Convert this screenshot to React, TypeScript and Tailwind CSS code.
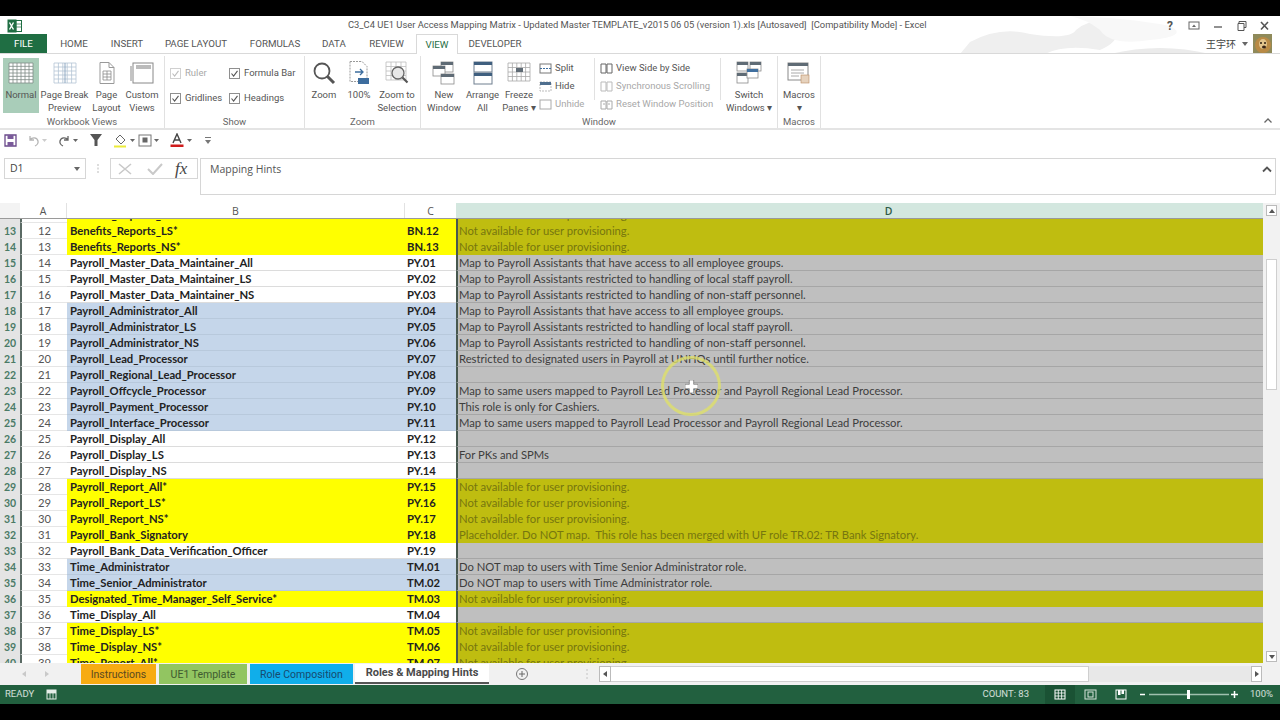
import React from 'react';

type Tone = 'yellow' | 'white' | 'blue';

interface Row {
  num: number;
  name: string;
  code: string;
  hint: string;
  tone: Tone;
}

const NA = 'Not available for user provisioning.';
const ALL = 'Map to Payroll Assistants that have access to all employee groups.';
const LOCAL = 'Map to Payroll Assistants restricted to handling of local staff payroll.';
const NON = 'Map to Payroll Assistants restricted to handling of non-staff personnel.';
const SAME = 'Map to same users mapped to Payroll Lead Processor and Payroll Regional Lead Processor.';

const rows: Row[] = [
  { num: 12, name: 'Benefits_Reports_All*', code: 'BN.11', hint: NA, tone: 'yellow' },
  { num: 13, name: 'Benefits_Reports_LS*', code: 'BN.12', hint: NA, tone: 'yellow' },
  { num: 14, name: 'Benefits_Reports_NS*', code: 'BN.13', hint: NA, tone: 'yellow' },
  { num: 15, name: 'Payroll_Master_Data_Maintainer_All', code: 'PY.01', hint: ALL, tone: 'white' },
  { num: 16, name: 'Payroll_Master_Data_Maintainer_LS', code: 'PY.02', hint: LOCAL, tone: 'white' },
  { num: 17, name: 'Payroll_Master_Data_Maintainer_NS', code: 'PY.03', hint: NON, tone: 'white' },
  { num: 18, name: 'Payroll_Administrator_All', code: 'PY.04', hint: ALL, tone: 'blue' },
  { num: 19, name: 'Payroll_Administrator_LS', code: 'PY.05', hint: LOCAL, tone: 'blue' },
  { num: 20, name: 'Payroll_Administrator_NS', code: 'PY.06', hint: NON, tone: 'blue' },
  { num: 21, name: 'Payroll_Lead_Processor', code: 'PY.07', hint: 'Restricted to designated users in Payroll at UNHQs until further notice.', tone: 'blue' },
  { num: 22, name: 'Payroll_Regional_Lead_Processor', code: 'PY.08', hint: '', tone: 'blue' },
  { num: 23, name: 'Payroll_Offcycle_Processor', code: 'PY.09', hint: SAME, tone: 'blue' },
  { num: 24, name: 'Payroll_Payment_Processor', code: 'PY.10', hint: 'This role is only for Cashiers.', tone: 'blue' },
  { num: 25, name: 'Payroll_Interface_Processor', code: 'PY.11', hint: SAME, tone: 'blue' },
  { num: 26, name: 'Payroll_Display_All', code: 'PY.12', hint: '', tone: 'white' },
  { num: 27, name: 'Payroll_Display_LS', code: 'PY.13', hint: 'For PKs and SPMs', tone: 'white' },
  { num: 28, name: 'Payroll_Display_NS', code: 'PY.14', hint: '', tone: 'white' },
  { num: 29, name: 'Payroll_Report_All*', code: 'PY.15', hint: NA, tone: 'yellow' },
  { num: 30, name: 'Payroll_Report_LS*', code: 'PY.16', hint: NA, tone: 'yellow' },
  { num: 31, name: 'Payroll_Report_NS*', code: 'PY.17', hint: NA, tone: 'yellow' },
  { num: 32, name: 'Payroll_Bank_Signatory', code: 'PY.18', hint: 'Placeholder. Do NOT map.  This role has been merged with UF role TR.02: TR Bank Signatory.', tone: 'yellow' },
  { num: 33, name: 'Payroll_Bank_Data_Verification_Officer', code: 'PY.19', hint: '', tone: 'white' },
  { num: 34, name: 'Time_Administrator', code: 'TM.01', hint: 'Do NOT map to users with Time Senior Administrator role.', tone: 'blue' },
  { num: 35, name: 'Time_Senior_Administrator', code: 'TM.02', hint: 'Do NOT map to users with Time Administrator role.', tone: 'blue' },
  { num: 36, name: 'Designated_Time_Manager_Self_Service*', code: 'TM.03', hint: NA, tone: 'yellow' },
  { num: 37, name: 'Time_Display_All', code: 'TM.04', hint: '', tone: 'white' },
  { num: 38, name: 'Time_Display_LS*', code: 'TM.05', hint: NA, tone: 'yellow' },
  { num: 39, name: 'Time_Display_NS*', code: 'TM.06', hint: NA, tone: 'yellow' },
  { num: 40, name: 'Time_Report_All*', code: 'TM.07', hint: NA, tone: 'yellow' },
];

const toneCell: Record<Tone, string> = {
  yellow: 'bg-[#ffff00]',
  white: 'bg-white border-b border-[#dcdcdc]',
  blue: 'bg-[#c5d6ea] border-b border-[#b8c9dc]',
};

const toneHint: Record<Tone, string> = {
  yellow: 'bg-[#bfbd10] text-[#76760f]',
  white: 'bg-[#bfbfbf] text-[#3d3d3d] border-b border-[#a6a6a6]',
  blue: 'bg-[#bfbfbf] text-[#3d3d3d] border-b border-[#a6a6a6]',
};

const menuTabs = [
  { label: 'HOME', w: 'w-[54px]' },
  { label: 'INSERT', w: 'w-[52px]' },
  { label: 'PAGE LAYOUT', w: 'w-[86px]' },
  { label: 'FORMULAS', w: 'w-[72px]' },
  { label: 'DATA', w: 'w-[46px]' },
  { label: 'REVIEW', w: 'w-[59px]' },
];

function Grid({ x, y, w, h, nx, ny, color }: { x: number; y: number; w: number; h: number; nx: number; ny: number; color: string }) {
  const lines = [];
  for (let i = 0; i <= nx; i++) lines.push(<line key={'v' + i} x1={x + (w * i) / nx} x2={x + (w * i) / nx} y1={y} y2={y + h} />);
  for (let i = 0; i <= ny; i++) lines.push(<line key={'h' + i} x1={x} x2={x + w} y1={y + (h * i) / ny} y2={y + (h * i) / ny} />);
  return <g stroke={color} strokeWidth="0.8" fill="none">{lines}</g>;
}

function Win({ x, y, w, h, bar = '#5f6b75' }: { x: number; y: number; w: number; h: number; bar?: string }) {
  return (
    <g>
      <rect x={x} y={y} width={w} height={h} fill="#fff" stroke="#8a8a8a" strokeWidth="0.8" />
      <rect x={x} y={y} width={w} height={3} fill={bar} />
    </g>
  );
}

function Icon({ w = 28, h = 28, children }: { w?: number; h?: number; children: React.ReactNode }) {
  return <svg width={w} height={h} viewBox={`0 0 ${w} ${h}`}>{children}</svg>;
}

function BigButton({ width, lines, active, icon }: { width: string; lines: string[]; active?: boolean; icon: React.ReactNode }) {
  return (
    <div className={`${width} h-[55px] flex flex-col items-center shrink-0 ${active ? 'bg-[#a9cdb9]' : ''}`}>
      <div className="h-[30px] shrink-0 flex items-center justify-center">{icon}</div>
      {lines.map((line) => (
        <div key={line} className="text-[9.5px] leading-[13px] text-[#555] whitespace-nowrap">{line}</div>
      ))}
    </div>
  );
}

function Check({ label, disabled }: { label: string; disabled?: boolean }) {
  return (
    <div className="flex items-center gap-[4px]">
      <span className={`w-[11px] h-[11px] border flex items-center justify-center bg-white ${disabled ? 'border-[#d0d0d0]' : 'border-[#8f8f8f]'}`}>
        <svg width="9" height="9" viewBox="0 0 9 9"><path d="M1.500 4.500 3.600 7 7.500 1.800" fill="none" stroke={disabled ? '#bdbdbd' : '#555'} strokeWidth="1.100" /></svg>
      </span>
      <span className={`text-[9.5px] whitespace-nowrap ${disabled ? 'text-[#a8a8a8]' : 'text-[#555]'}`}>{label}</span>
    </div>
  );
}

function Group({ width, label, children }: { width: string; label: string; children: React.ReactNode }) {
  return (
    <div className={`${width} shrink-0 h-[72px] mt-[2px] border-r border-[#e1e1e1] flex flex-col`}>
      <div className="h-[55px] mt-[2px] flex">{children}</div>
      <div className="text-center text-[9.5px] leading-[13px] mt-[2px] text-[#666]">{label}</div>
    </div>
  );
}

function SmallRow({ icon, label, dim }: { icon: React.ReactNode; label: string; dim?: boolean }) {
  return (
    <div className="h-[18px] flex items-center gap-[3px]">
      {icon}
      <span className={`text-[9.5px] whitespace-nowrap ${dim ? 'text-[#a8a8a8]' : 'text-[#555]'}`}>{label}</span>
    </div>
  );
}

function Ribbon() {
  return (
    <div className="h-[76px] flex bg-white border-b-2 border-[#e4e4e4] relative shrink-0">
      <div className="pl-[3px] w-[165px] shrink-0 h-[72px] mt-[2px] border-r border-[#e1e1e1] flex flex-col">
        <div className="h-[55px] mt-[2px] flex">
          <BigButton width="w-[36px]" lines={['Normal']} active icon={
            <Icon w={26} h={24}><rect x="1" y="2" width="24" height="20" fill="#fff" /><Grid x={1} y={2} w={24} h={20} nx={6} ny={6} color="#7d8a85" /></Icon>
          } />
          <BigButton width="w-[49px] ml-[1px]" lines={['Page Break', 'Preview']} icon={
            <Icon w={24} h={24}><Grid x={1} y={2} w={22} h={20} nx={5} ny={5} color="#b4c4d4" /><line x1="12" x2="12" y1="2" y2="22" stroke="#8ca6c0" /></Icon>
          } />
          <BigButton width="w-[35px]" lines={['Page', 'Layout']} icon={
            <Icon w={20} h={24}><path d="M3 1.500h9l5 5v16H3z" fill="#fff" stroke="#999" /><path d="M12 1.500v5h5" fill="none" stroke="#999" /><Grid x={6} y={10} w={8} h={9} nx={2} ny={3} color="#8a8a8a" /></Icon>
          } />
          <BigButton width="w-[36px]" lines={['Custom', 'Views']} icon={
            <Icon w={24} h={24}><rect x="3" y="2" width="20" height="20" fill="#fff" stroke="#888" /><rect x="6" y="4" width="15" height="4" fill="#bbb" /><path d="M1 5v15" stroke="#888" /></Icon>
          } />
        </div>
        <div className="text-center text-[9.5px] leading-[13px] mt-[2px] text-[#666] pr-[3px]">Workbook Views</div>
      </div>

      <Group width="w-[140px]" label="Show">
        <div className="grid grid-cols-[59px_1fr] pl-[5px] pt-[3px] auto-rows-[25px]">
          <Check label="Ruler" disabled />
          <Check label="Formula Bar" />
          <Check label="Gridlines" />
          <Check label="Headings" />
        </div>
      </Group>

      <Group width="w-[116px]" label="Zoom">
        <BigButton width="w-[38px]" lines={['Zoom']} icon={
          <Icon w={24} h={24}><circle cx="10" cy="10" r="7.500" fill="#fff" stroke="#555" strokeWidth="1.800" /><path d="m15.500 15.500 6.500 6.500" stroke="#555" strokeWidth="3" /></Icon>
        } />
        <BigButton width="w-[32px]" lines={['100%']} icon={
          <Icon w={22} h={26}><path d="M2 1.500h12l5 5v15H2z" fill="#fff" stroke="#999" strokeDasharray="2 1" /><path d="M7 12h8m-3-3 3 3-3 3" fill="none" stroke="#3d6d9e" strokeWidth="1.300" /><rect x="10" y="18" width="11" height="6" fill="#3d6d9e" /></Icon>
        } />
        <BigButton width="w-[44px]" lines={['Zoom to', 'Selection']} icon={
          <Icon w={26} h={26}><Grid x={2} y={2} w={20} h={18} nx={4} ny={4} color="#bdbdbd" /><circle cx="14" cy="13" r="6" fill="#e8e8e8" stroke="#666" strokeWidth="1.300" /><path d="m18.500 17.500 5 5" stroke="#555" strokeWidth="2.200" /></Icon>
        } />
      </Group>

      <Group width="w-[357px]" label="Window">
        <BigButton width="w-[42px] ml-[2px]" lines={['New', 'Window']} icon={
          <Icon w={24} h={24}><Win x={9} y={1} w={12} h={10} /><Win x={1} y={5} w={12} h={10} /><Win x={9} y={13} w={13} h={10} /></Icon>
        } />
        <BigButton width="w-[35px]" lines={['Arrange', 'All']} icon={
          <Icon w={22} h={24}><rect x="2" y="1" width="18" height="10" fill="#fff" stroke="#6f7f8f" /><rect x="2" y="1" width="18" height="3" fill="#3f5f7f" /><rect x="2" y="12" width="18" height="11" fill="#fff" stroke="#6f7f8f" /><rect x="2" y="12" width="18" height="3" fill="#3f5f7f" /></Icon>
        } />
        <BigButton width="w-[38px]" lines={['Freeze', 'Panes ▾']} icon={
          <Icon w={24} h={24}><Grid x={1} y={2} w={22} h={18} nx={5} ny={4} color="#a8a8a8" /><rect x="9" y="7" width="7" height="4" fill="#5f6b75" /></Icon>
        } />
        <div className="w-[56px] flex flex-col pl-[1px] mt-[1px]">
          <SmallRow label="Split" icon={<Icon w={13} h={13}><rect x="1" y="2" width="11" height="9" fill="#fff" stroke="#777" /><path d="M1 6.500h11" stroke="#3f6f9f" strokeDasharray="2 1" /></Icon>} />
          <SmallRow label="Hide" icon={<Icon w={13} h={13}><rect x="1" y="2" width="11" height="9" fill="#fff" stroke="#bbb" strokeDasharray="2 1" /><rect x="1" y="2" width="11" height="3" fill="#4f6f8f" /></Icon>} />
          <SmallRow label="Unhide" dim icon={<Icon w={13} h={13}><rect x="1" y="2" width="11" height="9" fill="#fff" stroke="#aaa" /></Icon>} />
        </div>
        <div className="w-px h-[42px] bg-[#e1e1e1] mr-[5px] ml-[1px]" />
        <div className="w-[120px] flex flex-col mt-[1px]">
          <SmallRow label="View Side by Side" icon={<Icon w={13} h={13}><path d="M1 2h5v9H1zM7 2h5v9H7z" fill="#fff" stroke="#666" /></Icon>} />
          <SmallRow label="Synchronous Scrolling" dim icon={<Icon w={13} h={13}><path d="M1 2h5v9H1zM7 2h5v9H7z" fill="#fff" stroke="#bbb" /></Icon>} />
          <SmallRow label="Reset Window Position" dim icon={<Icon w={13} h={13}><path d="M1 3h5v8H1zM7 3h5v8H7zM3 6h2M8 6h2" fill="#fff" stroke="#aaa" /></Icon>} />
        </div>
        <div className="w-px h-[42px] bg-[#e1e1e1] ml-[2px]" />
        <BigButton width="w-[56px]" lines={['Switch', 'Windows ▾']} icon={
          <Icon w={26} h={24}><Win x={1} y={1} w={11} h={9} /><Win x={14} y={1} w={11} h={9} /><Win x={1} y={12} w={11} h={10} /><Win x={11} y={8} w={11} h={9} bar="#3f6f9f" /></Icon>
        } />
      </Group>

      <Group width="w-[43px]" label="Macros">
        <BigButton width="w-[42px]" lines={['Macros', '▾']} icon={
          <Icon w={26} h={24}><rect x="2" y="2" width="20" height="17" fill="#fff" stroke="#8a8a8a" /><rect x="2" y="2" width="20" height="3" fill="#5f6b75" /><path d="M5 9h13M5 12h13M5 15h8" stroke="#aaa" /><rect x="15" y="14" width="8" height="8" fill="#e6d2bd" stroke="#b98b62" strokeWidth="0.600" /></Icon>
        } />
      </Group>

      <svg className="absolute right-[7px] bottom-[4px]" width="10" height="7" viewBox="0 0 10 7"><path d="m1.500 5.500 3.500-3.500 3.500 3.500" fill="none" stroke="#666" strokeWidth="1.300" /></svg>
    </div>
  );
}

function TitleBars() {
  return (
    <div className="relative shrink-0">
      <svg className="absolute left-[960px] top-0" width="250" height="38" viewBox="0 0 250 38">
        <path d="M0 38 10 26Q40 10 70 18 110 24 116 14 130 2 155 4 165 24 140 34 105 28 85 38Z" fill="#efefef" />
        <path d="M150 38Q200 26 250 38Z" fill="#ebebeb" />
        <path d="M110 0Q170 2 210 10 230 20 190 24 150 30 140 14 128 4 110 0Z" fill="#f8f8f8" />
      </svg>
      <div className="relative h-[19px] flex items-center">
        <svg className="ml-[7px]" width="15" height="14" viewBox="0 0 15 14">
          <rect x="6" y="1.500" width="8.500" height="11" fill="#fff" stroke="#1f6e43" />
          <path d="M9 2v10M6 5h8M6 8h8" stroke="#1f6e43" strokeWidth="0.700" />
          <rect x="0.500" y="0.500" width="9" height="13" fill="#1f6e43" />
          <path d="m2.500 3.500 4 7M6.500 3.500l-4 7" stroke="#fff" strokeWidth="1.400" />
        </svg>
        <div className="absolute left-[348px] text-[9.4px] text-[#555] whitespace-pre">
          C3_C4 UE1 User Access Mapping Matrix - Updated Master TEMPLATE_v2015 06 05 (version 1).xls [Autosaved]  [Compatibility Mode] - Excel
        </div>
        <div className="ml-auto flex items-center text-[#555]">
          <span className="w-[24px] text-center text-[12px] font-bold leading-none">?</span>
          <svg className="mx-[1px]" width="22" height="10" viewBox="0 0 22 10"><rect x="6" y="1" width="10" height="7" fill="none" stroke="#666" /><path d="m9 6 2-2.400L13 6z" fill="#666" /></svg>
          <svg width="24" height="10" viewBox="0 0 24 10"><path d="M8 6h8" stroke="#555" strokeWidth="1.300" /></svg>
          <svg width="24" height="10" viewBox="0 0 24 10"><path d="M9 2V0.500h7v6h-2M8 2.500h6v7H8z" fill="none" stroke="#555" /></svg>
          <svg className="mr-[4px]" width="22" height="10" viewBox="0 0 22 10"><path d="m7 1 7 7.500M14 1 7 8.500" stroke="#555" strokeWidth="1.600" /></svg>
        </div>
      </div>
      <div className="relative h-[19px] flex items-end border-b border-[#d9d9d9]">
        <div className="w-[47px] h-[19px] pt-[2px] bg-[#1f6e43] text-white text-[9.75px] flex items-center justify-center">FILE</div>
        {menuTabs.map((t) => (
          <div key={t.label} className={`${t.w} h-[19px] pt-[2px] text-[9.75px] text-[#555] flex items-center justify-center`}>{t.label}</div>
        ))}
        <div className="w-[42px] h-[20px] -mb-px pt-[2px] bg-white border border-b-0 border-[#d9d9d9] text-[9.75px] text-[#1f6e43] flex items-center justify-center">VIEW</div>
        <div className="w-[74px] h-[19px] pt-[2px] text-[9.75px] text-[#555] flex items-center justify-center">DEVELOPER</div>
        <div className="ml-auto flex items-center h-[19px] pr-[8px]">
          <span className="text-[10px] text-[#444] font-['Noto_Sans_CJK_SC',sans-serif]">王宇环</span>
          <svg className="ml-[6px] mr-[5px]" width="6" height="4" viewBox="0 0 6 4"><path d="M0 0h6L3 4z" fill="#666" /></svg>
          <svg width="19" height="19" viewBox="0 0 19 19">
            <rect width="19" height="19" fill="#8f8a5a" />
            <ellipse cx="10" cy="11" rx="8" ry="8" fill="#b98a45" />
            <ellipse cx="10" cy="10" rx="4" ry="5" fill="#e2c48c" />
            <circle cx="8" cy="9" r="1" fill="#2a1c10" />
            <circle cx="12" cy="9" r="1" fill="#2a1c10" />
            <ellipse cx="11" cy="13" rx="2" ry="1.600" fill="#3a2415" />
          </svg>
        </div>
      </div>
    </div>
  );
}

function QuickAccess() {
  return (
    <div className="h-[25px] pb-[5px] bg-white flex items-center pl-[4px] shrink-0">
      <svg width="13" height="13" viewBox="0 0 13 13"><path d="M1 1h11v11H1z" fill="#fff" stroke="#6a4a8a" strokeWidth="1.300" /><path d="M3.500 1h6v4h-6zM3.500 8h6v4h-6z" fill="#7a5a9a" /></svg>
      <svg className="ml-[10px]" width="13" height="13" viewBox="0 0 13 13"><path d="M3 2v4h4M3 6c2-3 7-3 8 1 .4 2-1 4-3 5" fill="none" stroke="#b5b5b5" strokeWidth="1.300" /></svg>
      <svg className="ml-[2px]" width="5" height="3" viewBox="0 0 5 3"><path d="M0 0h5L2.500 3z" fill="#ccc" /></svg>
      <svg className="ml-[11px]" width="13" height="13" viewBox="0 0 13 13"><path d="M10 2v4H6M10 6c-2-3-7-3-8 1-.4 2 1 4 3 5" fill="none" stroke="#666" strokeWidth="1.300" /></svg>
      <svg className="ml-[2px]" width="5" height="3" viewBox="0 0 5 3"><path d="M0 0h5L2.500 3z" fill="#666" /></svg>
      <svg className="ml-[11px]" width="14" height="14" viewBox="0 0 14 14"><path d="M1 1h12L8.500 7v6h-3V7z" fill="#555" /></svg>
      <svg className="ml-[10px]" width="15" height="15" viewBox="0 0 15 15"><path d="m7 2 5 5-4 4-5-5z" fill="#fff" stroke="#666" /><rect x="1" y="12.500" width="12" height="2" fill="#ecec3a" /></svg>
      <svg className="ml-[2px]" width="5" height="3" viewBox="0 0 5 3"><path d="M0 0h5L2.500 3z" fill="#666" /></svg>
      <svg className="ml-[3px]" width="14" height="13" viewBox="0 0 14 13"><rect x="1" y="1" width="12" height="11" fill="#fff" stroke="#777" /><rect x="4.500" y="3.500" width="5" height="5" fill="#666" /></svg>
      <svg className="ml-[2px]" width="5" height="3" viewBox="0 0 5 3"><path d="M0 0h5L2.500 3z" fill="#666" /></svg>
      <svg className="ml-[11px]" width="14" height="14" viewBox="0 0 14 14"><path d="m3 10 4-9 4 9M4.500 7h5" fill="none" stroke="#444" strokeWidth="1.400" /><rect x="0.500" y="11.500" width="13" height="2.500" fill="#d01c1c" /></svg>
      <svg className="ml-[3px]" width="5" height="3" viewBox="0 0 5 3"><path d="M0 0h5L2.500 3z" fill="#666" /></svg>
      <svg className="ml-[13px]" width="6" height="7" viewBox="0 0 6 7"><path d="M0 0h6v1H0zM0 3h6L3 7z" fill="#777" /></svg>
    </div>
  );
}

function FormulaBar() {
  return (
    <div className="h-[48px] bg-white flex items-start pt-[3px] shrink-0 font-['Open_Sans',sans-serif]">
      <div className="ml-[4px] w-[82px] h-[21px] border border-[#d6d6d6] flex items-center justify-between pl-[5px] pr-[5px]">
        <span className="text-[10.5px] text-[#444]">D1</span>
        <svg width="6" height="4" viewBox="0 0 6 4"><path d="M0 0h6L3 4z" fill="#666" /></svg>
      </div>
      <div className="w-[24px] h-[21px] flex items-center justify-center">
        <svg width="2" height="9" viewBox="0 0 2 9"><path d="M1 0v2M1 3.500v2M1 7v2" stroke="#bbb" /></svg>
      </div>
      <div className="w-[88px] h-[21px] border border-[#d6d6d6] flex items-center pl-[7px]">
        <svg width="14" height="12" viewBox="0 0 14 12"><path d="m1 1 12 10M13 1 1 11" stroke="#c9c9c9" strokeWidth="1.600" /></svg>
        <svg className="ml-[15px]" width="16" height="12" viewBox="0 0 16 12"><path d="m1 6 5 5 9-10" fill="none" stroke="#c9c9c9" strokeWidth="2" /></svg>
        <span className="ml-[12px] font-['Liberation_Serif',serif] italic text-[17px] leading-none text-[#444]">fx</span>
      </div>
      <div className="ml-[2px] w-[1076px] h-[37px] border border-[#d6d6d6] flex justify-between pl-[9px] pr-[3px] pt-[2px]">
        <span className="text-[10.5px] leading-[16px] text-[#555]">Mapping Hints</span>
        <svg className="mt-[5px]" width="10" height="7" viewBox="0 0 10 7"><path d="m1 5.500 4-4 4 4" fill="none" stroke="#555" strokeWidth="1.800" /></svg>
      </div>
    </div>
  );
}

function Sheet() {
  return (
    <div className="flex-1 min-h-0 flex font-['Lato',sans-serif] text-[11.25px]">
      <div className="w-[1263px] flex flex-col min-h-0">
        <div className="relative z-10 h-[16px] flex shrink-0 text-[10.5px] text-[#555] border-b border-[#9a9a9a] font-['Open_Sans',sans-serif]">
          <div className="w-[20px] bg-[#f3f3f3]" />
          <div className="w-[47px] bg-white text-center leading-[16px] border-r border-[#e2e2e2]">A</div>
          <div className="w-[338px] bg-white text-center leading-[16px] border-r border-[#e2e2e2]">B</div>
          <div className="w-[51px] bg-white text-center leading-[16px]">C</div>
          <div className="flex-1 bg-[#d3e7df] pl-[58px] text-center font-semibold leading-[16px] text-[#2e5a46]">D</div>
        </div>
        <div className="flex-1 min-h-0 overflow-hidden">
          <div className="-mt-[12px]">
            {rows.map((r) => (
              <div key={r.num} className="h-[16px] flex">
                <div className="w-[20px] shrink-0 bg-[#e4e4e4] text-center leading-[16px] text-[#4a7a66] font-bold text-[10.5px]">{r.num}</div>
                <div className="w-[47px] shrink-0 bg-white border-l-2 border-[#5a6a64] border-b border-b-[#e6e6e6] text-center leading-[15px] text-[#555]">{r.num - 1}</div>
                <div className={`w-[338px] shrink-0 pl-[3px] font-bold leading-[15px] whitespace-nowrap text-[#222] ${toneCell[r.tone]}`}>{r.name}</div>
                <div className={`w-[51px] shrink-0 pl-[2px] font-bold leading-[15px] text-[#222] ${toneCell[r.tone]}`}>{r.code}</div>
                <div className={`flex-1 border-l-2 border-l-[#47584f] pl-[1px] leading-[15px] whitespace-pre ${toneHint[r.tone]}`}>{r.hint}</div>
              </div>
            ))}
          </div>
        </div>
      </div>
      <div className="flex-1 bg-[#f2f2f2] flex flex-col items-center pt-[2px] pb-[1px]">
        <div className="w-[11px] h-[11px] bg-white border border-[#bbb] flex items-center justify-center">
          <svg width="6" height="4" viewBox="0 0 6 4"><path d="M3 0l3 4H0z" fill="#555" /></svg>
        </div>
        <div className="w-[11px] h-[131px] mt-[43px] bg-white border border-[#cfcfcf]" />
        <div className="w-[11px] h-[11px] mt-auto bg-white border border-[#bbb] flex items-center justify-center">
          <svg width="6" height="4" viewBox="0 0 6 4"><path d="M0 0h6L3 4z" fill="#555" /></svg>
        </div>
      </div>
    </div>
  );
}

function SheetTabs() {
  return (
    <div className="h-[22px] bg-[#f1f1f1] flex items-center shrink-0 text-[10.5px]">
      <div className="w-[81px] flex items-center pl-[22px] gap-[19px] text-[#c4c4c4]">
        <svg width="4" height="6" viewBox="0 0 4 6"><path d="M4 0v6L0 3z" fill="#c9c9c9" /></svg>
        <svg width="4" height="6" viewBox="0 0 4 6"><path d="M0 0v6l4-3z" fill="#c9c9c9" /></svg>
      </div>
      <div className="w-[75px] h-[20px] pt-[1px] bg-[#f7ab12] text-[#5a4a20] flex items-center justify-center">Instructions</div>
      <div className="ml-[3px] w-[88px] h-[20px] pt-[1px] bg-[#92c561] text-[#3e5a30] flex items-center justify-center">UE1 Template</div>
      <div className="ml-[3px] w-[103px] h-[20px] pt-[1px] bg-[#10aeea] text-[#174a6e] flex items-center justify-center">Role Composition</div>
      <div className="ml-[2px] w-[134px] h-[20px] pt-[1px] bg-white border-b-2 border-[#555] font-bold text-[11px] text-[#4a4a4a] flex items-center justify-center">Roles &amp; Mapping Hints</div>
      <div className="ml-[27px] w-[12px] h-[12px] rounded-full border border-[#777] flex items-center justify-center">
        <svg width="8" height="8" viewBox="0 0 8 8"><path d="M4 1v6M1 4h6" stroke="#666" /></svg>
      </div>
      <svg className="ml-[58px]" width="2" height="10" viewBox="0 0 2 10"><path d="M1 0v2M1 4v2M1 8v2" stroke="#c4c4c4" /></svg>
      <div className="ml-[11px] w-[12px] h-[16px] bg-white border border-[#bbb] flex items-center justify-center">
        <svg width="4" height="6" viewBox="0 0 4 6"><path d="M4 0v6L0 3z" fill="#555" /></svg>
      </div>
      <div className="w-[478px] h-[16px] bg-white border-y border-r border-[#cfcfcf]" />
      <div className="flex-1 max-w-[162px] h-[16px] bg-[#e8e8e8]" />
      <div className="w-[11px] h-[16px] bg-white border border-[#bbb] flex items-center justify-center">
        <svg width="4" height="6" viewBox="0 0 4 6"><path d="M0 0v6l4-3z" fill="#555" /></svg>
      </div>
    </div>
  );
}

function StatusBar() {
  return (
    <div className="h-[19px] bg-[#22603f] flex items-center text-white/80 text-[9.5px] shrink-0">
      <span className="pl-[5px] w-[46px]">READY</span>
      <svg width="11" height="11" viewBox="0 0 11 11"><rect x="1" y="1" width="9" height="9" fill="none" stroke="#e6eee9" /><path d="M1 4h9M4 4v6M7 4v6" stroke="#e6eee9" strokeWidth="0.800" /><rect x="1" y="1" width="9" height="3" fill="#e6eee9" /></svg>
      <span className="ml-auto mr-[16px]">COUNT: 83</span>
      <div className="w-[30px] h-[19px] bg-[#1a5234] flex items-center justify-center">
        <svg width="12" height="11" viewBox="0 0 12 11"><rect x="1" y="1" width="10" height="9" fill="none" stroke="#fff" /><path d="M1 4h10M1 7h10M4.300 1v9M7.600 1v9" stroke="#fff" strokeWidth="0.800" /></svg>
      </div>
      <svg className="ml-[9px]" width="13" height="11" viewBox="0 0 13 11"><rect x="1" y="1" width="11" height="9" fill="none" stroke="#d7e3dc" /><rect x="4" y="3" width="5" height="5" fill="none" stroke="#d7e3dc" /></svg>
      <svg className="ml-[18px]" width="12" height="11" viewBox="0 0 12 11"><rect x="1" y="1" width="10" height="9" fill="none" stroke="#fff" /><path d="M3 1h2.500v5H3zM6.500 1H9v4H6.500z" fill="#fff" /></svg>
      <svg className="ml-[13px]" width="96" height="11" viewBox="0 0 96 11">
        <path d="M0 5.500h5" stroke="#fff" strokeWidth="1.500" />
        <path d="M9 5.500h80" stroke="#9fc0ae" strokeWidth="1.500" />
        <rect x="47" y="1" width="3" height="9" fill="#fff" />
      </svg>
      <svg className="-ml-[5px]" width="7" height="7" viewBox="0 0 7 7"><path d="M3.500 0v7M0 3.500h7" stroke="#fff" strokeWidth="1.500" /></svg>
      <span className="ml-[12px] mr-[7px]">100%</span>
    </div>
  );
}

export default function App() {
  return (
    <div className="w-[1280px] h-[720px] bg-black overflow-hidden font-['Roboto',sans-serif] relative">
      <div className="mt-[16px] h-[688px] bg-white flex flex-col">
        <TitleBars />
        <Ribbon />
        <QuickAccess />
        <FormulaBar />
        <Sheet />
        <SheetTabs />
        <StatusBar />
      </div>
      {/* recording cursor highlight */}
      <div className="absolute left-[661px] top-[356px] w-[60px] h-[60px] rounded-full border-[3px] border-[#dfe06a]/80 flex items-center justify-center">
        <svg width="13" height="13" viewBox="0 0 12 12"><path d="M4 0h4v4h4v4H8v4H4V8H0V4h4z" fill="#fff" stroke="#555" strokeWidth="0.500" /></svg>
      </div>
    </div>
  );
}
